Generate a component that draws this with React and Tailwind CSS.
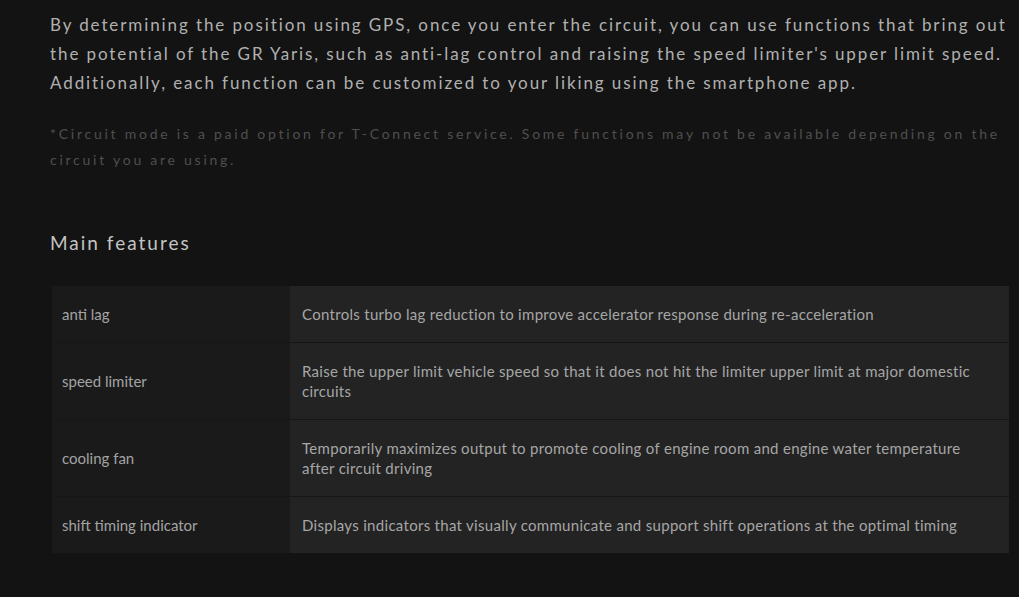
export default function App() {
  const rows = [
    ["anti lag", "Controls turbo lag reduction to improve accelerator response during re-acceleration"],
    ["speed limiter", "Raise the upper limit vehicle speed so that it does not hit the limiter upper limit at major domestic circuits"],
    ["cooling fan", "Temporarily maximizes output to promote cooling of engine room and engine water temperature after circuit driving"],
    ["shift timing indicator", "Displays indicators that visually communicate and support shift operations at the optimal timing"],
  ];
  return (
    <div className="w-[1019px] h-[597px] bg-[#131313] overflow-hidden" style={{ fontFamily: "Lato, 'Noto Sans', sans-serif" }}>
      <div className="pl-[50px] pr-[6px] pt-[10px]">
        <p className="text-[17px] leading-[29px] tracking-[1.9px] text-[#b0b0b0]">
          By determining the position using GPS, once you enter the circuit, you can use functions that bring out the potential of the GR Yaris, such as anti-lag control and raising the speed limiter's upper limit speed. Additionally, each function can be customized to your liking using the smartphone app.
        </p>
        <p className="mt-[24px] text-[14px] leading-[26px] tracking-[2.75px] text-[#4f4f4f]">
          *Circuit mode is a paid option for T-Connect service. Some functions may not be available depending on the circuit you are using.
        </p>
        <h2 className="mt-[56px] text-[19px] leading-[28px] tracking-[2px] text-[#c4c4c4]">Main features</h2>
        <div className="mt-[29px] ml-[2px] flex flex-col gap-px bg-[#161616] w-[957px]">
          {rows.map(([k, v]) => (
            <div key={k} className="flex text-[15px] leading-[20px]">
              <div className="w-[238px] shrink-0 bg-[#1a1a1a] px-[10px] py-[18px] flex items-center text-[#a3a3a3]">{k}</div>
              <div className="flex-1 bg-[#232323] pl-[12px] pr-[30px] py-[18px] tracking-[0.3px] text-[#a6a6a6]">{v}</div>
            </div>
          ))}
        </div>
      </div>
    </div>
  );
}
